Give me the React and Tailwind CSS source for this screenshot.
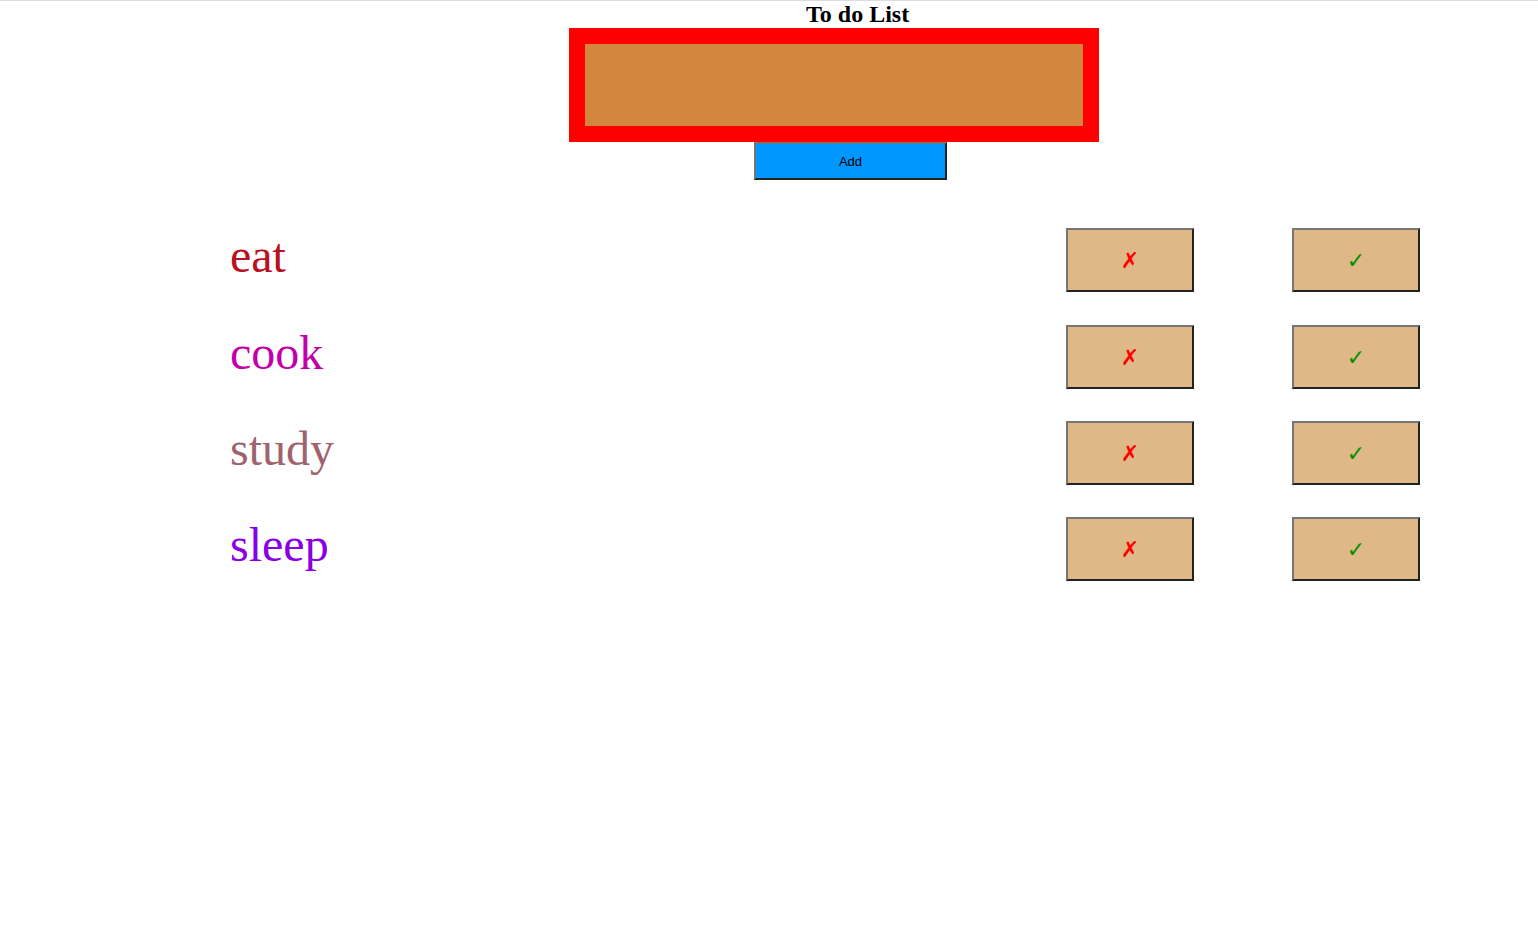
const todos = [
  { name: "eat", color: "text-[#b8111f]" },
  { name: "cook", color: "text-[#c300a8]" },
  { name: "study", color: "text-[#a0636e]" },
  { name: "sleep", color: "text-[#8a00e6]" },
];

function ActionButton({ children, className }) {
  return (
    <button
      className={`w-[128px] h-[64px] bg-[#deb887] border-2 border-t-[#767676] border-l-[#767676] border-b-[#222] border-r-[#222] flex items-center justify-center text-[22px] font-['DejaVu_Sans',sans-serif] ${className}`}
    >
      {children}
    </button>
  );
}

export default function App() {
  return (
    <div className="min-h-screen bg-white border-t border-[#dcdce0] font-['Liberation_Serif',serif]">
      <h2 className="ml-[806px] text-[24px] leading-[27px] font-bold text-black">To do List</h2>

      <input
        type="text"
        className="block ml-[569px] w-[530px] h-[114px] border-[16px] border-[#ff0000] bg-[#d3863e] outline-none"
      />

      <button className="block ml-[754px] w-[193px] h-[38px] pt-[2px] bg-[#0096ff] border-2 border-t-[#767676] border-l-[#767676] border-b-[#222] border-r-[#222] text-[13px] text-black font-['Liberation_Sans',Arial,sans-serif]">
        Add
      </button>

      <ul className="mt-[48px] flex flex-col gap-[32px]">
        {todos.map((t, i) => (
          <li key={t.name} className={`flex items-center pl-[230px] pr-[118px] ${i === 1 ? "mt-px" : ""}`}>
            <span className={`flex-1 mb-[9px] text-[48px] leading-[55px] ${t.color}`}>{t.name}</span>
            <div className="flex gap-[98px]">
              <ActionButton className="text-[#ff0000]">✗</ActionButton>
              <ActionButton className="text-[#009100]">✓</ActionButton>
            </div>
          </li>
        ))}
      </ul>
    </div>
  );
}
